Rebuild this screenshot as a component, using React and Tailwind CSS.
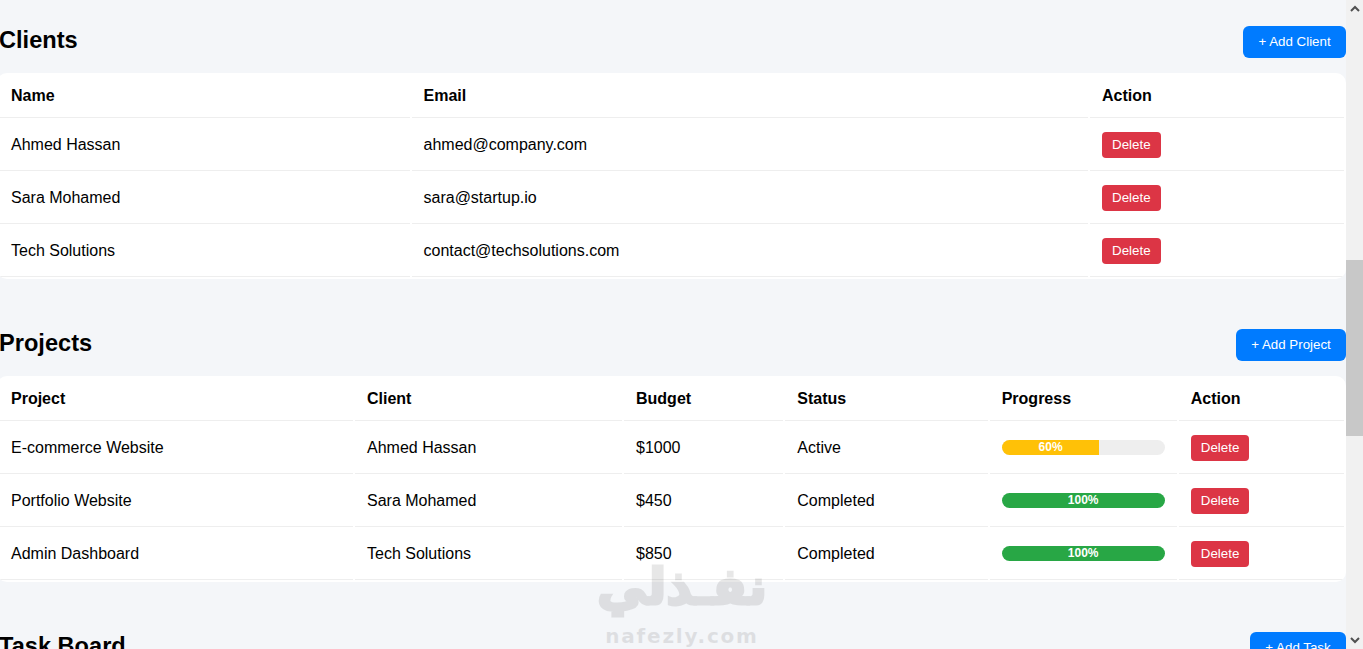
const font = { fontFamily: '"Liberation Sans", Arial, sans-serif' };

function DeleteButton() {
  return (
    <button className="h-[26px] w-[58.6px] rounded-[4px] bg-[#dc3545] text-[13.33px] leading-[26px] text-white">
      Delete
    </button>
  );
}

function SectionHeader({ title, action, width }) {
  return (
    <div className="mb-[15px] flex h-8 items-start justify-between">
      <h2 className="ml-[-1px] text-[23.6px] leading-[28px] font-bold text-black">{title}</h2>
      <button className={`h-8 rounded-[6px] bg-[#007bff] text-[13.33px] leading-8 text-white ${width}`}>{action}</button>
    </div>
  );
}

function Th({ children }) {
  return <th className="border-b border-[#eeeeee] px-3 py-3 text-left text-base leading-[18px] font-bold text-black">{children}</th>;
}

function Td({ children }) {
  return <td className="h-[51px] border-b border-[#eeeeee] px-3 py-0 text-left align-middle text-base leading-[18px] text-black">{children}</td>;
}

function Progress({ value, color }) {
  return (
    <div className="mb-[2px] h-[15px] w-[163px] overflow-hidden rounded-lg bg-[#eeeeee]">
      <div className={`h-full text-center text-xs leading-[15px] font-bold text-white ${color}`} style={{ width: `${value}%` }}>
        {value}%
      </div>
    </div>
  );
}

const clients = [
  ["Ahmed Hassan", "ahmed@company.com"],
  ["Sara Mohamed", "sara@startup.io"],
  ["Tech Solutions", "contact@techsolutions.com"],
];

const projects = [
  ["E-commerce Website", "Ahmed Hassan", "$1000", "Active", 60, "bg-[#ffc107]"],
  ["Portfolio Website", "Sara Mohamed", "$450", "Completed", 100, "bg-[#28a745]"],
  ["Admin Dashboard", "Tech Solutions", "$850", "Completed", 100, "bg-[#28a745]"],
];

function Table({ widths, children }) {
  return (
    <div className="ml-[-3px] overflow-hidden rounded-[10px] bg-white">
      <table className="w-[1349px] table-fixed border-separate border-spacing-[2px]">
        <colgroup>
          {widths.map((w, i) => (
            <col key={i} style={{ width: w }} />
          ))}
        </colgroup>
        {children}
      </table>
    </div>
  );
}

export default function App() {
  return (
    <div className="relative flex h-[649px] overflow-hidden bg-[#f4f6f9]" style={font}>
      <main className="min-w-0 flex-1 overflow-hidden pt-[26px]">
        <section className="mb-[50px]">
          <SectionHeader title="Clients" action="+ Add Client" width="w-[103px]" />
          <Table widths={[410.5, 676.5, 254]}>
            <thead>
              <tr>
                <Th>Name</Th>
                <Th>Email</Th>
                <Th>Action</Th>
              </tr>
            </thead>
            <tbody>
              {clients.map(([name, email]) => (
                <tr key={name}>
                  <Td>{name}</Td>
                  <Td>{email}</Td>
                  <Td>
                    <DeleteButton />
                  </Td>
                </tr>
              ))}
            </tbody>
          </Table>
        </section>

        <section className="mb-[50px]">
          <SectionHeader title="Projects" action="+ Add Project" width="w-[110px]" />
          <Table widths={[354, 267, 159.3, 202.4, 187.1, 165.2]}>
            <thead>
              <tr>
                <Th>Project</Th>
                <Th>Client</Th>
                <Th>Budget</Th>
                <Th>Status</Th>
                <Th>Progress</Th>
                <Th>Action</Th>
              </tr>
            </thead>
            <tbody>
              {projects.map(([name, client, budget, status, value, color]) => (
                <tr key={name}>
                  <Td>{name}</Td>
                  <Td>{client}</Td>
                  <Td>{budget}</Td>
                  <Td>{status}</Td>
                  <Td>
                    <Progress value={value} color={color} />
                  </Td>
                  <Td>
                    <DeleteButton />
                  </Td>
                </tr>
              ))}
            </tbody>
          </Table>
        </section>

        <section>
          <SectionHeader title="Task Board" action="+ Add Task" width="w-[96px]" />
        </section>
      </main>

      <aside className="flex w-[17px] shrink-0 flex-col bg-[#f1f1f1]">
        <div className="flex h-[17px] items-center justify-center">
          <svg width="10" height="7" viewBox="0 0 10 7" fill="none" stroke="#505050" strokeWidth="2">
            <path d="M1 6l4-4 4 4" />
          </svg>
        </div>
        <div className="mt-[243px] h-[176px] bg-[#c8c8c8]" />
        <div className="mt-auto flex h-[17px] items-center justify-center">
          <svg width="10" height="7" viewBox="0 0 10 7" fill="none" stroke="#505050" strokeWidth="2">
            <path d="M1 1l4 4 4-4" />
          </svg>
        </div>
      </aside>

      <div className="pointer-events-none absolute top-[551px] left-[590px] flex w-[184px] flex-col items-center text-[#000000] opacity-[0.09]">
        <span
          className="text-[50px] leading-[72px] font-bold [-webkit-text-stroke:3px_#000000]"
          style={{ fontFamily: '"DejaVu Sans", sans-serif' }}
          dir="rtl"
        >
          نفـذلي
        </span>
        <span className="mt-[3px] text-[20px] leading-[20px] font-bold tracking-[1.8px]" style={{ fontFamily: '"DejaVu Sans", sans-serif' }}>
          nafezly.com
        </span>
      </div>
    </div>
  );
}
